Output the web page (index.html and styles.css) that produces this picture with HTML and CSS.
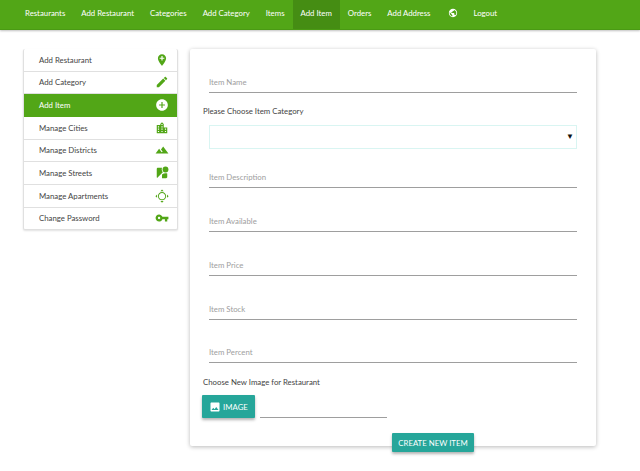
FILE: index.html
```html
<!DOCTYPE html>
<html lang="en">
<head>
    <meta charset="UTF-8">
    <meta name="viewport" content="width=device-width, initial-scale=1.0">
    <title>Add Item</title>
    <link rel="stylesheet" href="styles.css">
</head>
<body>
    <nav class="topnav">
        <a href="#">Restaurants</a>
        <a href="#">Add Restaurant</a>
        <a href="#">Categories</a>
        <a href="#">Add Category</a>
        <a href="#">Items</a>
        <a href="#" class="active">Add Item</a>
        <a href="#">Orders</a>
        <a href="#">Add Address</a>
        <a href="#" class="nav-icon"><svg viewBox="0 0 24 24"><path d="M12 2C6.48 2 2 6.48 2 12s4.48 10 10 10 10-4.48 10-10S17.52 2 12 2zm-1 17.93c-3.95-.49-7-3.85-7-7.93 0-.62.08-1.21.21-1.79L9 15v1c0 1.1.9 2 2 2v1.93zm6.9-2.54c-.26-.81-1-1.39-1.9-1.39h-1v-3c0-.55-.45-1-1-1H8v-2h2c.55 0 1-.45 1-1V7h2c1.1 0 2-.9 2-2v-.41c2.93 1.19 5 4.06 5 7.41 0 2.08-.8 3.97-2.1 5.39z"/></svg></a>
        <a href="#">Logout</a>
    </nav>

    <div class="content">
        <ul class="side-menu">
            <li><a href="#">Add Restaurant<svg viewBox="0 0 24 24"><path d="M12 2C8.14 2 5 5.14 5 9c0 5.25 7 13 7 13s7-7.75 7-13c0-3.86-3.14-7-7-7zm4 8h-3v3h-2v-3H8V8h3V5h2v3h3v2z"/></svg></a></li>
            <li><a href="#">Add Category<svg viewBox="0 0 24 24"><path d="M3 17.25V21h3.75L17.81 9.94l-3.75-3.75L3 17.25zM20.71 7.04c.39-.39.39-1.02 0-1.41l-2.34-2.34c-.39-.39-1.02-.39-1.41 0l-1.83 1.83 3.75 3.75 1.83-1.83z"/></svg></a></li>
            <li class="active"><a href="#">Add Item<svg viewBox="0 0 24 24"><path d="M12 2C6.48 2 2 6.48 2 12s4.48 10 10 10 10-4.48 10-10S17.52 2 12 2zm5 11h-4v4h-2v-4H7v-2h4V7h2v4h4v2z"/></svg></a></li>
            <li><a href="#">Manage Cities<svg viewBox="0 0 24 24"><path d="M15 11V5l-3-3-3 3v2H3v14h18V11h-6zm-8 8H5v-2h2v2zm0-4H5v-2h2v2zm0-4H5V9h2v2zm6 8h-2v-2h2v2zm0-4h-2v-2h2v2zm0-4h-2V9h2v2zm0-4h-2V5h2v2zm6 12h-2v-2h2v2zm0-4h-2v-2h2v2z"/></svg></a></li>
            <li><a href="#">Manage Districts<svg viewBox="0 0 24 24"><path d="M14 6l-3.75 5 2.85 3.8-1.6 1.2C9.81 13.75 7 10 7 10l-6 8h22L14 6z"/></svg></a></li>
            <li><a href="#">Manage Streets<svg viewBox="0 0 24 24"><path d="M12.56 14.33c-.34.27-.56.7-.56 1.17V21h7c1.1 0 2-.9 2-2v-5.98c-.94-.33-1.95-.52-3-.52-2.03 0-3.93.7-5.44 1.83z"/><circle cx="18" cy="6" r="5"/><path d="M11.5 6c0-1.08.27-2.1.74-3H5c-1.1 0-2 .9-2 2v14c0 .55.23 1.05.59 1.41l9.82-9.82C12.23 9.42 11.5 7.8 11.5 6z"/></svg></a></li>
            <li><a href="#">Manage Apartments<svg viewBox="0 0 24 24"><path transform="rotate(45 12 12)" d="M16.21 4.16l4 4v-4zm4 12l-4 4h4zm-12 4l-4-4v4zm-4-12l4-4h-4zm12.95-.95c-2.73-2.73-7.17-2.73-9.9 0s-2.73 7.17 0 9.9 7.17 2.73 9.9 0 2.73-7.16 0-9.9zm-1.1 8.8c-2.13 2.13-5.57 2.13-7.7 0s-2.13-5.57 0-7.7 5.57-2.13 7.7 0 2.13 5.57 0 7.7z"/></svg></a></li>
            <li><a href="#">Change Password<svg viewBox="0 0 24 24"><path d="M12.65 10C11.83 7.67 9.61 6 7 6c-3.31 0-6 2.69-6 6s2.69 6 6 6c2.61 0 4.83-1.67 5.65-4H17v4h4v-4h2v-4H12.65zM7 14c-1.1 0-2-.9-2-2s.9-2 2-2 2 .9 2 2-.9 2-2 2z"/></svg></a></li>
        </ul>

        <form class="card">
            <div class="field"><input type="text" placeholder="Item Name"></div>
            <label class="form-label">Please Choose Item Category</label>
            <div class="select-wrap">
                <select></select>
                <span class="select-arrow">&#9660;</span>
            </div>
            <div class="field after-select"><input type="text" placeholder="Item Description"></div>
            <div class="field"><input type="text" placeholder="Item Available"></div>
            <div class="field"><input type="text" placeholder="Item Price"></div>
            <div class="field"><input type="text" placeholder="Item Stock"></div>
            <div class="field last"><input type="text" placeholder="Item Percent"></div>
            <label class="form-label">Choose New Image for Restaurant</label>
            <div class="file-row">
                <button type="button" class="btn"><svg viewBox="0 0 24 24"><path d="M21 19V5c0-1.1-.9-2-2-2H5c-1.1 0-2 .9-2 2v14c0 1.1.9 2 2 2h14c1.1 0 2-.9 2-2zM8.5 13.5l2.5 3.01L14.5 12l4.5 6H5l3.5-4.5z"/></svg>IMAGE</button>
                <input type="text" class="file-path">
            </div>
            <button type="button" class="btn submit">CREATE NEW ITEM</button>
        </form>
    </div>
</body>
</html>
```

FILE: styles.css
```css
* {
    box-sizing: border-box;
}

html, body {
    min-height: 100vh;
}

body {
    margin: 0;
    font-family: Lato, "Open Sans", sans-serif;
    font-size: 7.8px;
    color: #444;
    background: #fff;
}

a {
    color: inherit;
    text-decoration: none;
}

.topnav {
    display: flex;
    height: 30px;
    padding-left: 17px;
    background: #52a617;
    border-bottom: 1px solid #4a9a14;
    box-shadow: 0 1px 2px rgba(0,0,0,0.25);
}

.topnav a {
    display: flex;
    align-items: center;
    padding: 0 8px 3px;
    color: #fff;
}

.topnav a.active {
    background: #458d13;
}

.topnav .nav-icon {
    padding: 0 7px 3px 10px;
}

.nav-icon svg {
    width: 10px;
    height: 10px;
    fill: #fff;
}

.content {
    display: flex;
    align-items: flex-start;
    gap: 12px;
    padding: 19px 0 0 23px;
}

.side-menu {
    width: 155px;
    margin: 0;
    padding: 0;
    list-style: none;
    background: #fff;
    border: 1px solid #e0e0e0;
    border-top: none;
    border-radius: 2px;
    box-shadow: 0 1px 2px rgba(0,0,0,0.12);
}

.side-menu li {
    height: 22.66px;
    border-bottom: 1px solid #e0e0e0;
}

.side-menu li:last-child {
    height: 21px;
    border-bottom: none;
}

.side-menu a {
    display: flex;
    align-items: center;
    justify-content: space-between;
    height: 100%;
    padding: 0 8.5px 0 15px;
}

.side-menu svg {
    width: 14px;
    height: 14px;
    fill: #52a617;
}

.side-menu .active {
    background: #52a617;
    border-bottom-color: #52a617;
    color: #fff;
}

.side-menu .active svg {
    fill: #fff;
}

.card {
    width: 406px;
    height: 397px;
    padding: 0 19px 0 13px;
    background: #fff;
    box-shadow: 0 1px 4px rgba(0,0,0,0.28);
    border-radius: 2px;
}

.field {
    height: 44px;
    padding: 17px 0 0 6px;
}

.field.after-select {
    height: 39px;
    padding-top: 12px;
}

.field.last {
    height: 43px;
    padding-top: 16px;
}

.field input {
    width: 100%;
    height: 27px;
    padding: 5px 0 0;
    border: none;
    border-bottom: 1px solid #9e9e9e;
    outline: none;
    font: inherit;
}

.field input::placeholder {
    color: #9e9e9e;
}

.form-label {
    display: block;
    margin-top: 12px;
    line-height: 12px;
}

.select-wrap {
    position: relative;
    margin: 8px 0 0 6px;
}

.select-wrap select {
    display: block;
    width: 100%;
    height: 24px;
    background: #fff;
    border: 1px solid #d9f5f2;
    border-radius: 0;
    appearance: none;
}

.select-arrow {
    position: absolute;
    top: 6px;
    right: 3px;
    font-size: 8px;
    color: #111;
}

.field.last + .form-label {
    margin-top: 13px;
}

.file-row {
    display: flex;
    align-items: flex-end;
    gap: 5px;
    margin: 7px 0 0 -1px;
}

.btn {
    display: inline-flex;
    align-items: center;
    justify-content: center;
    border: none;
    border-radius: 1px;
    background: #26a69a;
    color: #fff;
    font-family: inherit;
    font-size: 7.8px;
    white-space: nowrap;
    box-shadow: 0 2px 3px rgba(0,0,0,0.3);
}

.file-row .btn {
    width: 53px;
    height: 23px;
    gap: 2px;
}

.btn svg {
    width: 12px;
    height: 12px;
    fill: #fff;
}

.file-path {
    width: 127px;
    height: 20px;
    border: none;
    border-bottom: 1px solid #9e9e9e;
    outline: none;
}

.submit {
    display: flex;
    width: 82px;
    height: 19px;
    margin: 15px 0 0 189px;
}
```
